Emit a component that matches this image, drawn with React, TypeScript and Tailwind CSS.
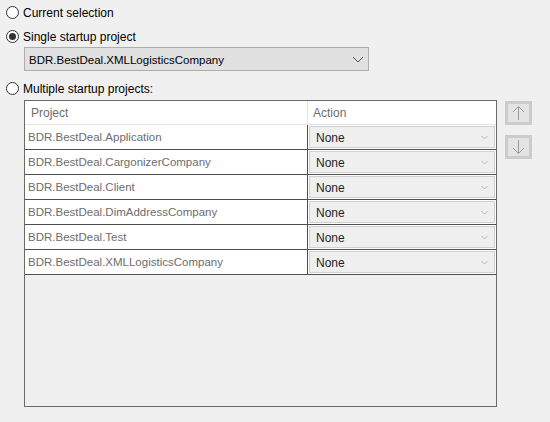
import React from "react";

const font = { fontFamily: '"Liberation Sans", Arial, sans-serif' };

function Radio({ checked, label }: { checked?: boolean; label: string }) {
  return (
    <div className="flex h-4 items-center">
      <div className="flex h-[13px] w-[13px] items-center justify-center rounded-full border border-[#333333] bg-white">
        {checked && <div className="h-[7px] w-[7px] rounded-full bg-[#333333]" />}
      </div>
      <span className="ml-[4px] pt-px text-[12px] leading-4 text-black">{label}</span>
    </div>
  );
}

const projects = [
  "BDR.BestDeal.Application",
  "BDR.BestDeal.CargonizerCompany",
  "BDR.BestDeal.Client",
  "BDR.BestDeal.DimAddressCompany",
  "BDR.BestDeal.Test",
  "BDR.BestDeal.XMLLogisticsCompany",
];

function ArrowBtn({ up }: { up?: boolean }) {
  return (
    <div className="flex h-[24px] w-[27px] items-center justify-center bg-[#cccccc] p-[3px]">
      <div className="flex h-full w-full items-center justify-center bg-[#e4e4e4]">
        <svg width="13" height="16" viewBox="0 0 13 16" fill="none" stroke="#9c9c9c" strokeWidth="1">
          {up ? (
            <>
              <path d="M6.5 1.5V15" />
              <path d="M1 7L6.5 1.5L12 7" />
            </>
          ) : (
            <>
              <path d="M6.5 1V14.5" />
              <path d="M1 9L6.5 14.5L12 9" />
            </>
          )}
        </svg>
      </div>
    </div>
  );
}

export default function App() {
  return (
    <div className="h-[422px] w-[550px] bg-[#f0f0f0] pl-[6px] pt-[4px]" style={font}>
      <Radio label="Current selection" />
      <div className="mt-2">
        <Radio checked label="Single startup project" />
      </div>
      <div className="ml-[18px] mt-[3px] flex h-[24px] w-[345px] items-center justify-between border border-[#adadad] bg-[#e1e1e1] pl-[4px] pr-[4px]">
        <span className="pt-px text-[11.5px] leading-4 text-black">BDR.BestDeal.XMLLogisticsCompany</span>
        <svg width="12" height="7" viewBox="0 0 12 7" fill="none" stroke="#505050" strokeWidth="1">
          <path d="M1 1L6 6L11 1" />
        </svg>
      </div>
      <div className="mt-[9px]">
        <Radio label="Multiple startup projects:" />
      </div>
      <div className="ml-[18px] mt-[4px] flex items-start">
        <div className="flex h-[307px] w-[473px] flex-col border border-[#6a6a6a] bg-[#f0f0f0]">
          <div className="flex h-[24px] bg-white text-[12px] text-[#6d6d6d]">
            <div className="flex w-[282px] items-center border-b border-[#e3e3e3] pl-[6px] pt-px">Project</div>
            <div className="w-px bg-[#e3e3e3]" />
            <div className="flex flex-1 items-center border-b border-[#e3e3e3] pl-[5px] pt-px">Action</div>
          </div>
          {projects.map((p) => (
            <div key={p} className="flex h-[25px] border-b border-[#505050] bg-white text-[12px]">
              <div className="flex w-[282px] items-center pl-[3px] pt-px text-[11.5px] text-[#6d6d6d]">{p}</div>
              <div className="w-px bg-[#505050]" />
              <div className="flex flex-1 p-px">
                <div className="flex flex-1 items-center justify-between border border-[#d0d0d0] bg-[#efefef] pl-[6px] pr-[6px] text-[#1e1e1e]">
                  <span className="pt-px">None</span>
                  <svg width="7" height="5" viewBox="0 0 7 5" fill="none" stroke="#b4b4b4" strokeWidth="1">
                    <path d="M0.5 1L3.5 4L6.5 1" />
                  </svg>
                </div>
              </div>
            </div>
          ))}
        </div>
        <div className="ml-[8px] mt-px flex flex-col gap-[10px]">
          <ArrowBtn up />
          <ArrowBtn />
        </div>
      </div>
    </div>
  );
}
